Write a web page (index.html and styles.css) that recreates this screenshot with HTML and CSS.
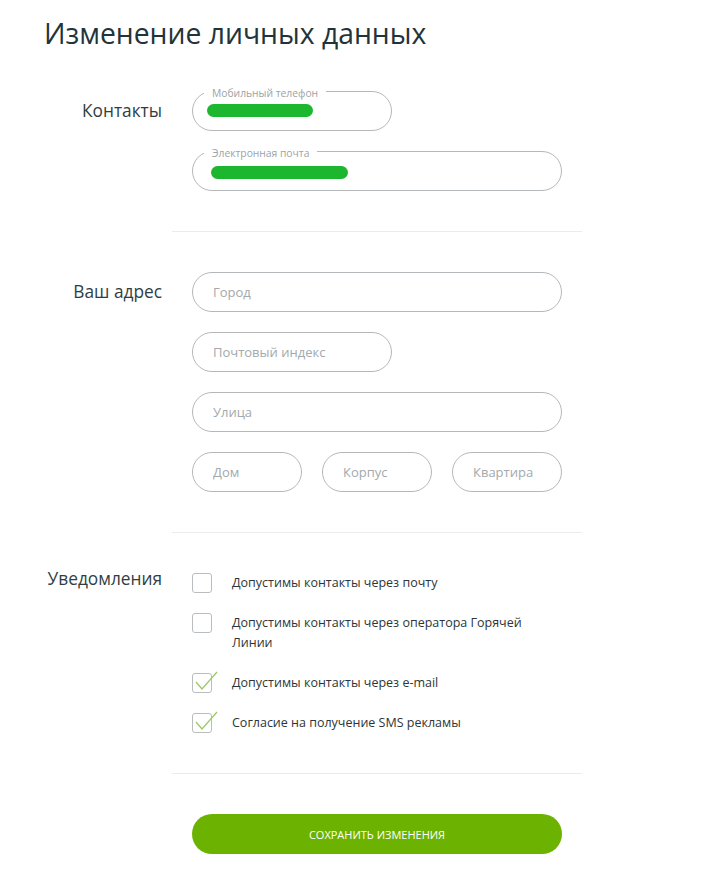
FILE: index.html
```html
<!DOCTYPE html>
<html lang="ru">
<head>
    <meta charset="UTF-8">
    <meta name="viewport" content="width=device-width, initial-scale=1.0">
    <title>Изменение личных данных</title>
    <link rel="stylesheet" href="styles.css">
</head>
<body>
    <div class="page">
        <h1 class="title">Изменение личных данных</h1>

        <div class="section">
            <div class="section-label">Контакты</div>
            <div class="fields">
                <div class="field field-short filled">
                    <span class="float-label">Мобильный телефон</span>
                    <span class="mask mask-phone"></span>
                </div>
                <div class="field filled">
                    <span class="float-label">Электронная почта</span>
                    <span class="mask mask-email"></span>
                </div>
            </div>
        </div>

        <div class="divider"></div>

        <div class="section">
            <div class="section-label">Ваш адрес</div>
            <div class="fields">
                <input class="field" type="text" placeholder="Город">
                <input class="field field-short" type="text" placeholder="Почтовый индекс">
                <input class="field" type="text" placeholder="Улица">
                <div class="field-row">
                    <input class="field" type="text" placeholder="Дом">
                    <input class="field" type="text" placeholder="Корпус">
                    <input class="field" type="text" placeholder="Квартира">
                </div>
            </div>
        </div>

        <div class="divider"></div>

        <div class="section">
            <div class="section-label label-notify">Уведомления</div>
            <div class="checks">
                <label class="check">
                    <span class="box"></span>
                    <span class="check-text">Допустимы контакты через почту</span>
                </label>
                <label class="check">
                    <span class="box"></span>
                    <span class="check-text">Допустимы контакты через оператора Горячей Линии</span>
                </label>
                <label class="check checked">
                    <span class="box">
                        <svg class="tick" width="26" height="22" viewBox="0 0 26 22"><path d="M2 13 L8 20 L23 3" fill="none" stroke="#9cc86a" stroke-width="1.3"/></svg>
                    </span>
                    <span class="check-text">Допустимы контакты через e-mail</span>
                </label>
                <label class="check checked">
                    <span class="box">
                        <svg class="tick" width="26" height="22" viewBox="0 0 26 22"><path d="M2 13 L8 20 L23 3" fill="none" stroke="#9cc86a" stroke-width="1.3"/></svg>
                    </span>
                    <span class="check-text">Согласие на получение SMS рекламы</span>
                </label>
            </div>
        </div>

        <div class="divider"></div>

        <div class="actions">
            <button class="save-btn" type="button">Сохранить изменения</button>
        </div>
    </div>
</body>
</html>
```

FILE: styles.css
```css
* {
    margin: 0;
    padding: 0;
    box-sizing: border-box;
}

body {
    font-family: 'Open Sans', 'Noto Sans', sans-serif;
    background: #fff;
    color: #333;
}

.page {
    width: 719px;
    padding-bottom: 26px;
}

.title {
    font-size: 28.3px;
    font-weight: 400;
    color: #22343a;
    line-height: 36px;
    padding: 15px 0 0 44px;
    height: 52px;
}

.section {
    display: grid;
    grid-template-columns: 162px 370px;
    column-gap: 30px;
    padding: 39px 0 40px;
}

.divider + .section {
    padding-top: 40px;
}

.section-label {
    text-align: right;
    font-size: 17.3px;
    color: #2f3e44;
    line-height: 40px;
}

.label-notify {
    line-height: 20px;
    margin-top: -4px;
}

.fields {
    display: flex;
    flex-direction: column;
    gap: 20px;
}

.field {
    position: relative;
    display: block;
    width: 370px;
    height: 40px;
    border: 1px solid #b4b8ba;
    border-radius: 20px;
    padding: 0 20px;
    font-family: inherit;
    font-size: 13px;
    color: #333;
    background: #fff;
    outline: none;
}

.field::placeholder {
    color: #a3a9ac;
}

.field-short {
    width: 200px;
}

.field-row {
    display: flex;
    gap: 20px;
}

.field-row .field {
    width: 110px;
}

.float-label {
    position: absolute;
    top: -5px;
    left: 11px;
    padding: 0 8px;
    background: #fff;
    font-size: 10.3px;
    line-height: 12px;
    color: #9da3a6;
}

.mask {
    position: absolute;
    height: 13px;
    border-radius: 7px;
    background: #1cb72f;
}

.mask-phone {
    left: 14px;
    top: 12px;
    width: 106px;
}

.mask-email {
    left: 18px;
    top: 14px;
    width: 137px;
}

.divider {
    margin-left: 172px;
    width: 410px;
    height: 1px;
    background: #ececec;
}

.checks {
    display: flex;
    flex-direction: column;
    gap: 20px;
}

.check {
    display: flex;
    align-items: flex-start;
    gap: 20px;
}

.box {
    position: relative;
    flex: none;
    width: 20px;
    height: 20px;
    border: 1px solid #b9bdbf;
    border-radius: 3px;
    background: #fff;
}

.tick {
    position: absolute;
    left: 1px;
    top: -5px;
}

.check-text {
    font-size: 12.5px;
    line-height: 20px;
    color: #2e3538;
    max-width: 310px;
}

.actions {
    padding: 40px 0 0 192px;
}

.save-btn {
    width: 370px;
    height: 40px;
    border: none;
    border-radius: 20px;
    background: #6bb300;
    color: #fff;
    font-family: inherit;
    font-size: 11px;
    text-transform: uppercase;
    cursor: pointer;
}
```
